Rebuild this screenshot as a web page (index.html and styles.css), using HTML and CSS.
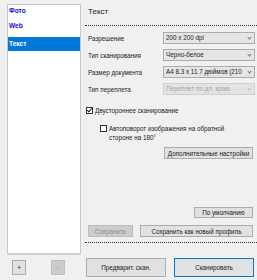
FILE: index.html
```html
<!DOCTYPE html>
<html lang="ru">

<head>
    <meta charset="UTF-8">
    <title>Профили сканирования</title>
    <link rel="stylesheet" href="styles.css">
</head>

<body>
    <div class="window">
        <div class="sidebar">
            <ul class="profiles">
                <li>Фото</li>
                <li>Web</li>
                <li class="selected">Текст</li>
            </ul>
            <div class="list-tools">
                <button class="btn small">+</button>
                <button class="btn small" disabled>-</button>
            </div>
        </div>
        <div class="main">
            <div class="title">Текст</div>
            <div class="sep"></div>
            <div class="form">
                <div class="row">
                    <span class="label">Разрешение</span>
                    <div class="combo">200 x 200 dpi</div>
                </div>
                <div class="row">
                    <span class="label">Тип сканирования</span>
                    <div class="combo">Черно-белое</div>
                </div>
                <div class="row">
                    <span class="label">Размер документа</span>
                    <div class="combo">A4 8.3 x 11.7 дюймов (210</div>
                </div>
                <div class="row">
                    <span class="label">Тип переплета</span>
                    <div class="combo disabled">Переплет по дл. краю</div>
                </div>
            </div>
            <label class="check">
                <span class="box checked"></span>
                <span>Двустороннее сканирование</span>
            </label>
            <label class="check sub">
                <span class="box"></span>
                <span>Автоповорот изображения на обратной стороне на 180°</span>
            </label>
            <div class="right">
                <button class="btn adv">Дополнительные настройки</button>
            </div>
            <div class="right defaults">
                <button class="btn">По умолчанию</button>
            </div>
            <div class="save-row">
                <button class="btn save" disabled>Сохранить</button>
                <button class="btn save-new">Сохранить как новый профиль</button>
            </div>
            <div class="sep"></div>
            <div class="actions">
                <button class="btn big">Предварит. скан.</button>
                <button class="btn big primary">Сканировать</button>
            </div>
        </div>
    </div>
</body>

</html>
```

FILE: styles.css
```css
body {
    margin: 0;
    padding: 0;
    background-color: #f0f0f0;
    font-family: 'Liberation Sans', Arial, sans-serif;
    font-size: 6.3px;
    color: #222;
}

.window {
    display: flex;
    width: 257px;
    height: 280px;
}

.sidebar {
    width: 85px;
    display: flex;
    flex-direction: column;
}

.profiles {
    list-style: none;
    margin: 4px 0 0 7px;
    padding: 2px 0 0 0;
    width: 72px;
    height: 246px;
    background-color: white;
    border: 1px solid #c8c8c8;
    border-bottom: 2px solid #cfcfcf;
}

.profiles li {
    height: 14px;
    line-height: 14px;
    padding-left: 1px;
    font-size: 6.6px;
    color: #1010e0;
    font-weight: bold;
}

.profiles li:first-child {
    height: 10px;
    line-height: 8px;
}

.profiles li:nth-child(2) {
    height: 20px;
    line-height: 18px;
}

.profiles li.selected {
    background-color: #0078d7;
    color: white;
}

.list-tools {
    display: flex;
    gap: 25px;
    margin: 5px 0 0 12px;
}

.btn {
    font-family: inherit;
    font-size: 6.3px;
    color: #222;
    background-color: #e1e1e1;
    border: 1px solid #adadad;
    padding: 0;
    margin: 0;
    height: 12px;
    white-space: nowrap;
}

.btn:disabled {
    background-color: #cccccc;
    border-color: #bfbfbf;
    color: #8d8d8d;
}

.btn.small {
    width: 14px;
    height: 15px;
}

.main {
    flex: 1;
    display: flex;
    flex-direction: column;
}

.title {
    height: 25px;
    line-height: 24px;
    padding-left: 3px;
    font-size: 8px;
    color: #222;
}

.sep {
    border-top: 1px dotted #333;
}

.form {
    display: flex;
    flex-direction: column;
    gap: 5px;
    margin-top: 6px;
}

.row {
    display: flex;
    align-items: center;
    height: 12px;
    padding-left: 3px;
}

.label {
    width: 75px;
}

.combo {
    position: relative;
    width: 80px;
    height: 10px;
    line-height: 10px;
    padding: 0 8px 0 2px;
    background-color: #e5e5e5;
    border: 1px solid #acacac;
    white-space: nowrap;
    overflow: hidden;
}

.combo::after {
    content: "";
    position: absolute;
    right: 3px;
    top: 3px;
    width: 2px;
    height: 2px;
    border-right: 1px solid #777;
    border-bottom: 1px solid #777;
    transform: rotate(45deg);
    background-color: #e5e5e5;
}

.combo.disabled {
    color: #a6a6a6;
    background-color: #e3e3e3;
    border-color: #d0d0d0;
}

.combo.disabled::after {
    border-color: #bbb;
}

.check {
    display: flex;
    align-items: flex-start;
    gap: 2px;
    margin: 11px 0 0 1px;
    line-height: 9px;
}

.check.sub {
    margin: 9px 0 0 15px;
    width: 130px;
}

.box {
    flex: none;
    width: 5px;
    height: 5px;
    border: 1px solid #333;
    background-color: white;
    margin-top: 1px;
    position: relative;
}

.box.checked::after {
    content: "";
    position: absolute;
    left: 1px;
    top: -1px;
    width: 2px;
    height: 4px;
    border-right: 1px solid #222;
    border-bottom: 1px solid #222;
    transform: rotate(40deg);
}

.right {
    display: flex;
    justify-content: flex-end;
    padding-right: 4px;
}

.adv {
    width: 89px;
    margin-top: 5px;
}

.defaults {
    margin-top: 48px;
}

.defaults .btn {
    width: 59px;
    height: 11px;
}

.save-row {
    display: flex;
    justify-content: space-between;
    margin: 7px 4px 5px 3px;
}

.save {
    width: 45px;
    height: 12px;
}

.save-new {
    width: 113px;
    height: 12px;
}

.actions {
    display: flex;
    justify-content: space-between;
    margin: 15px 3px 0 1px;
}

.btn.big {
    width: 80px;
    height: 19px;
}

.btn.primary {
    border: 1px solid #0078d7;
}
```
